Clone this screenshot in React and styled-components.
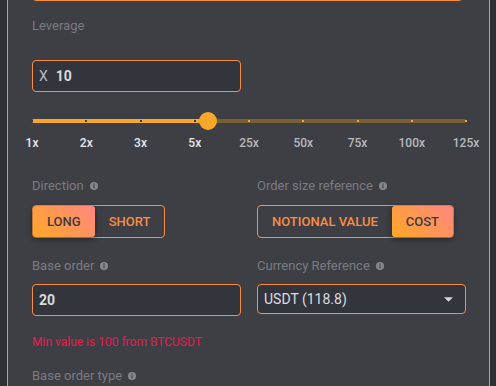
import styled, { createGlobalStyle } from "styled-components";

const GlobalStyle = createGlobalStyle`
  html, body {
    margin: 0;
    padding: 0;
    background: #2f3036;
    font-family: Roboto, "Noto Sans", sans-serif;
    overflow: hidden;
  }
`;

const ORANGE = "#fb8c44";

const marks = ["1x", "2x", "3x", "5x", "25x", "50x", "75x", "100x", "125x"];
const value = 40.625;

const App = () => {
  return (
    <>
      <GlobalStyle />
      <Page>
        <Panel>
          <TopField />

          <Label $top={17}>Leverage</Label>
          <Columns $top={26}>
            <Field>
              <Prefix>X</Prefix>
              <Value>10</Value>
            </Field>
          </Columns>

          <SliderBox>
            <Track>
              <Fill style={{ width: `${value}%` }} />
              {marks.map((m, i) => {
                const pos = (i / (marks.length - 1)) * 100;
                return <Tick key={m} $active={pos <= value} style={{ left: `${pos}%` }} />;
              })}
              <Thumb style={{ left: `${value}%` }} />
            </Track>
          </SliderBox>
          <Marks>
            {marks.map((m, i) => {
              const pos = (i / (marks.length - 1)) * 100;
              return (
                <Mark key={m} $active={pos <= value} style={{ left: `${pos}%` }}>
                  {m}
                </Mark>
              );
            })}
          </Marks>

          <Columns $top={28}>
            <div>
              <Label>Direction <Info /></Label>
              <Group>
                <Segment $selected>LONG</Segment>
                <Segment>SHORT</Segment>
              </Group>
            </div>
            <div>
              <Label>Order size reference <Info /></Label>
              <Group>
                <Segment>NOTIONAL VALUE</Segment>
                <Segment $selected>COST</Segment>
              </Group>
            </div>
          </Columns>

          <Columns $top={20}>
            <div>
              <Label>Base order <Info /></Label>
              <Field $top={10}>
                <Value>20</Value>
              </Field>
            </div>
            <div>
              <Label>Currency Reference <Info /></Label>
              <Select>
                <span>USDT (118.8)</span>
                <Caret viewBox="0 0 10 5">
                  <path d="M0 0h10L5 5z" fill="#d4d5da" />
                </Caret>
              </Select>
            </div>
          </Columns>

          <Error>Min value is 100 from BTCUSDT</Error>
          <Label $top={19}>Base order type <Info /></Label>
        </Panel>
      </Page>
    </>
  );
};

const Info = () => (
  <InfoIcon viewBox="0 0 8 8">
    <circle cx="4" cy="4" r="4" fill="#86878c" />
    <rect x="3.4" y="3.4" width="1.2" height="2.8" fill="#3e3f45" />
    <rect x="3.4" y="1.6" width="1.2" height="1.1" fill="#3e3f45" />
  </InfoIcon>
);

// styled components
const Page = styled.div`
  padding-left: 7px;
  width: 496px;
  height: 386px;
  box-sizing: border-box;
  overflow: hidden;
`;

const Panel = styled.div`
  display: flow-root;
  width: 483px;
  height: 100%;
  box-sizing: border-box;
  background: #3e3f45;
  border-left: 1px solid ${ORANGE};
  border-right: 1px solid ${ORANGE};
  padding: 0 23px 0 24px;
`;

const TopField = styled.div`
  height: 30px;
  width: 431px;
  margin-top: -29px;
  box-sizing: border-box;
  border: 1px solid ${ORANGE};
  border-radius: 4px;
  background: #33353d;
`;

const Label = styled.div`
  display: flex;
  align-items: center;
  gap: 6px;
  margin-top: ${(p) => p.$top || 0}px;
  font-size: 13px;
  line-height: 16px;
  color: #7a7b81;
`;

const InfoIcon = styled.svg`
  width: 8px;
  height: 8px;
`;

const Field = styled.div`
  display: flex;
  align-items: center;
  gap: 8px;
  height: 32px;
  margin-top: ${(p) => p.$top || 0}px;
  padding: 0 6px;
  box-sizing: border-box;
  border: 1px solid ${ORANGE};
  border-radius: 4px;
  background: #33353d;
`;

const Prefix = styled.span`
  font-size: 14px;
  color: #b9bdc9;
`;

const Value = styled.span`
  font-size: 14px;
  font-weight: 700;
  color: #d9dade;
`;

const SliderBox = styled.div`
  height: 24px;
  margin-top: 17px;
  display: flex;
  align-items: center;
`;

const Track = styled.div`
  position: relative;
  width: 100%;
  height: 4px;
  background: #7a6030;
  border-radius: 2px;
`;

const Fill = styled.div`
  height: 100%;
  background: #f9a72b;
  border-radius: 2px;
`;

const Tick = styled.span`
  position: absolute;
  top: 1px;
  width: 2px;
  height: 2px;
  margin-left: -1px;
  background: ${(p) => (p.$active ? "#3a3a3a" : "#f9a72b")};
`;

const Thumb = styled.span`
  position: absolute;
  top: 50%;
  width: 18px;
  height: 18px;
  border-radius: 50%;
  background: #f9a72b;
  transform: translate(-50%, -50%);
`;

const Marks = styled.div`
  position: relative;
  height: 14px;
  margin-top: 3px;
`;

const Mark = styled.span`
  position: absolute;
  top: 0;
  transform: translateX(-50%);
  font-size: 12px;
  line-height: 14px;
  font-weight: 500;
  color: ${(p) => (p.$active ? "#e8e8ea" : "#b8b9bd")};
`;

const Columns = styled.div`
  display: grid;
  grid-template-columns: 1fr 1fr;
  column-gap: 16px;
  margin-top: ${(p) => p.$top || 0}px;
`;

const Group = styled.div`
  display: inline-flex;
  margin-top: 11px;
  border: 1px solid ${ORANGE};
  border-radius: 4px;
`;

const Segment = styled.div`
  display: flex;
  align-items: center;
  height: 31px;
  padding: 0 14px;
  font-size: 13px;
  font-weight: 500;
  color: ${(p) => (p.$selected ? "#3a3b40" : "#fb8c44")};
  background: ${(p) =>
    p.$selected ? "linear-gradient(45deg, #ffa826 0%, #ff8680 100%)" : "transparent"};
  box-shadow: ${(p) => (p.$selected ? "0 2px 6px rgba(0, 0, 0, 0.45)" : "none")};
  border-radius: ${(p) => (p.$selected ? "3px" : "0")};
`;

const Select = styled.div`
  display: flex;
  align-items: center;
  justify-content: space-between;
  height: 30px;
  margin-top: 10px;
  padding: 0 12px 0 6px;
  box-sizing: border-box;
  border: 1px solid ${ORANGE};
  border-radius: 4px;
  background: #33353d;
  font-size: 14px;
  color: #dcdde1;
`;

const Caret = styled.svg`
  width: 9px;
  height: 5px;
`;

const Error = styled.div`
  margin-top: 19px;
  font-size: 12px;
  line-height: 14px;
  color: #e8194d;
`;

export default App;
